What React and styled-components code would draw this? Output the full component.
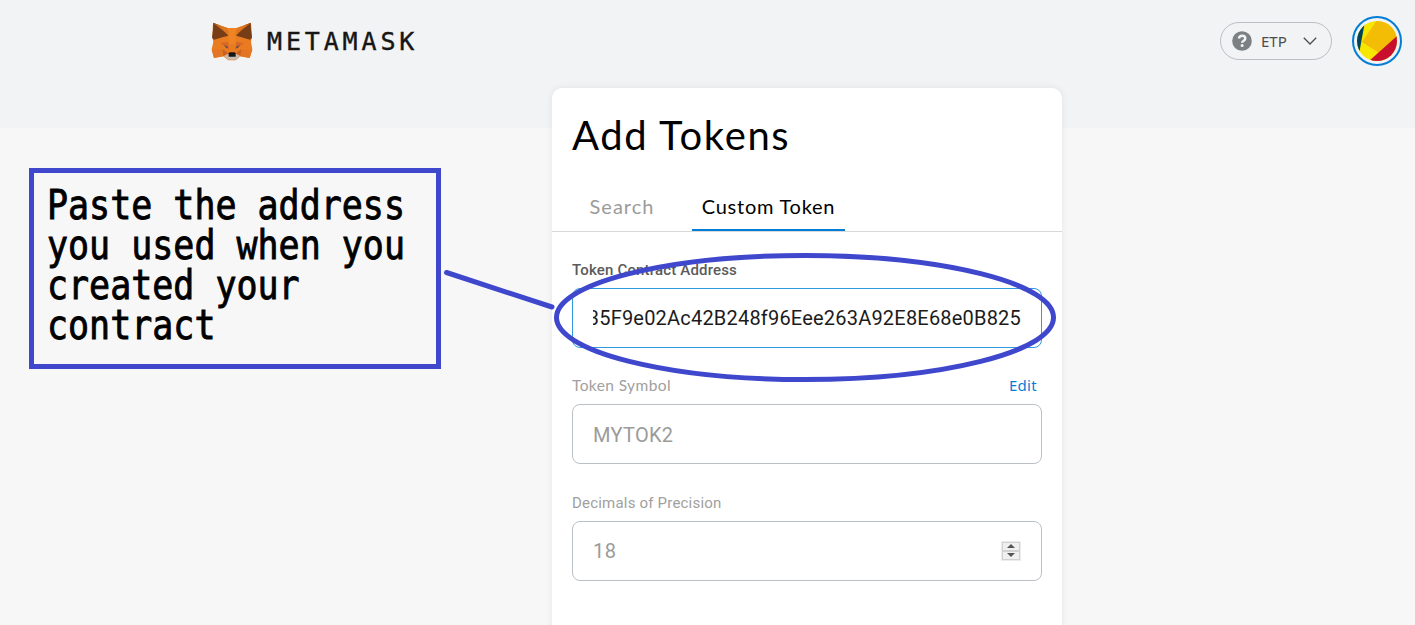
import React from 'react';
import styled, { createGlobalStyle } from 'styled-components';

const GlobalStyle = createGlobalStyle`
  * { box-sizing: border-box; }
  body {
    margin: 0;
    background: #f7f7f7;
    font-family: Roboto, "Liberation Sans", sans-serif;
    overflow: hidden;
  }
`;

const Page = styled.div`
  position: relative;
  height: 625px;
  overflow: hidden;
  background: linear-gradient(#f2f3f4 128px, #f7f7f7 128px);
`;

const Header = styled.header`
  display: flex;
  align-items: center;
  justify-content: space-between;
  height: 88px;
  padding: 0 13px 6px 211px;
`;

const Brand = styled.div`
  display: flex;
  align-items: center;
  gap: 14px;
`;

const Wordmark = styled.span`
  padding-top: 2px;
  font: 25px/30px "DejaVu Sans Mono", monospace;
  letter-spacing: 3.85px;
  color: #161616;
  -webkit-text-stroke: 0.4px #161616;
`;

const Account = styled.div`
  display: flex;
  align-items: center;
  gap: 20px;
`;

const NetworkPill = styled.div`
  display: flex;
  align-items: center;
  width: 112px;
  height: 38px;
  padding: 0 14px 0 11px;
  border: 1px solid #bbc0c5;
  border-radius: 19px;
  color: #4d4d4d;
`;

const NetworkName = styled.span`
  flex: 1;
  padding-left: 9px;
  font: 15px/20px "Noto Sans", sans-serif;
`;

const AvatarRing = styled.div`
  display: flex;
  align-items: center;
  justify-content: center;
  width: 50px;
  height: 50px;
  border: 2px solid #037dd6;
  border-radius: 50%;
`;

const Card = styled.main`
  width: 510px;
  height: 560px;
  margin-left: 552px;
  background: #fff;
  border-radius: 10px;
  box-shadow: 0 0 7px rgba(0, 0, 0, 0.08);
`;

const Title = styled.h1`
  margin: 0;
  padding: 23px 20px 0;
  font: 400 40px/48px Lato, sans-serif;
  letter-spacing: 1.65px;
  color: #000;
`;

const Tabs = styled.nav`
  display: flex;
  gap: 20px;
  height: 48px;
  margin-top: 25px;
  padding-left: 20px;
  border-bottom: 1px solid #d6d9dc;
`;

const Tab = styled.div`
  width: ${(p) => p.$width}px;
  height: 47px;
  padding-top: 10px;
  text-align: center;
  white-space: nowrap;
  font: 400 20px/24px Lato, sans-serif;
  letter-spacing: ${(p) => p.$spacing}px;
  color: ${(p) => (p.$active ? '#000' : '#9b9b9b')};
  border-bottom: ${(p) => (p.$active ? '2px solid #037dd6' : 'none')};
`;

const Form = styled.div`
  display: flex;
  flex-direction: column;
  padding: 28px 20px 0;
`;

const Field = styled.section`
  height: ${(p) => p.$height}px;
`;

const LabelRow = styled.div`
  display: flex;
  justify-content: space-between;
  height: ${(p) => p.$height}px;
  padding-right: 5px;
  line-height: 20px;
`;

const Label = styled.span`
  font-family: ${(p) => (p.$light ? 'Lato' : 'Roboto')}, sans-serif;
  font-size: ${(p) => p.$size}px;
  font-weight: ${(p) => (p.$strong ? 500 : 400)};
  letter-spacing: ${(p) => p.$spacing || 0}px;
  color: ${(p) => (p.$strong ? '#5b5b5b' : '#a0a0a0')};
`;

const EditLink = styled.span`
  font: 15px/20px "Noto Sans", sans-serif;
  letter-spacing: 0.3px;
  color: #037dd6;
`;

const InputBox = styled.div`
  display: flex;
  align-items: center;
  justify-content: space-between;
  height: 60px;
  padding: 0 20px;
  border: 1px solid ${(p) => (p.$focused ? '#2f9ae0' : '#bbc0c5')};
  border-radius: 8px;
  font-size: 20px;
  color: #9b9b9b;
`;

const Value = styled.span`
  padding-top: ${(p) => p.$drop || 0}px;
  letter-spacing: ${(p) => p.$spacing}px;
`;

const ScrolledValue = styled.div`
  display: flex;
  justify-content: flex-end;
  width: 100%;
  overflow: hidden;
  letter-spacing: 0.2px;
  color: #1b1b1b;
`;

const Spinner = styled.div`
  display: flex;
  flex-direction: column;
  width: 20px;
  height: 20px;
  margin-bottom: 1px;
  border: 1px solid #ececec;
`;

const SpinButton = styled.div`
  display: flex;
  flex: 1;
  align-items: center;
  justify-content: center;
  border: 1px solid #d2d2d2;
  background: #f0f0f0;
`;

const Callout = styled.aside`
  position: absolute;
  left: 29px;
  top: 168px;
  width: 412px;
  height: 201px;
  padding: 12px 0 0 13px;
  border: 5px solid #3f48cc;
`;

const CalloutText = styled.p`
  margin: 0;
  font: 41px/40px "DejaVu Sans Mono", monospace;
  white-space: pre;
  color: #000;
  -webkit-text-stroke: 0.9px #000;
  transform: scaleX(0.853);
  transform-origin: 0 0;
`;

const Markup = styled.svg`
  position: absolute;
  inset: 0;
  pointer-events: none;
`;

function Fox() {
  return (
    <svg width="42" height="39" viewBox="0 0 126 117">
      <path d="M6 3 50 18H77L120 3 123 42 120 60 124 82 116 108 88 103 74 115H52L37 103 9 108 2 82 7 60 4 42Z" fill="#e97b20" />
      <path d="M50 18H77L72 66H54Z" fill="#f08425" />
      <path d="M7 2 24 9 52 41 34 46 9 53 3 47 6 24Z" fill="#763d16" />
      <path d="M119 2 102 9 75 41 92 46 117 53 123 47 120 24Z" fill="#763d16" />
      <path d="M8 4 50 18 55 41ZM118 4 77 18 72 41Z" fill="#de751f" opacity=".85" />
      <path d="M28 63 51 60 54 83ZM99 63 76 60 72 83Z" fill="#d5672a" />
      <path d="M2 83H35L37 103 9 108ZM124 83H91L88 103 116 108Z" fill="#e27625" />
      <path d="M35 82 50 92 37 103ZM91 82 76 92 88 103Z" fill="#c95f27" />
      <path d="M39 70 51 75 48 79ZM87 70 75 75 78 79Z" fill="#344451" />
      <path d="M39 102 54 95H73L88 102 74 113H52Z" fill="#c8bcb1" />
      <path d="M53 94 56 91H71L74 94V104H53Z" fill="#161616" />
    </svg>
  );
}

function HelpIcon() {
  return (
    <svg width="20" height="20" viewBox="0 0 20 20">
      <circle cx="10" cy="10" r="9.8" fill="#7b8085" />
      <path d="M6.8 7.6C7.2 5.6 8.4 4.8 10.1 4.8c1.8 0 3.2 1.1 3.2 2.7 0 2.3-3.1 2.3-3.1 4.3" fill="none" stroke="#f2f3f4" strokeWidth="2.5" />
      <circle cx="10.1" cy="14.6" r="1.5" fill="#f2f3f4" />
    </svg>
  );
}

function Avatar() {
  return (
    <svg width="40" height="40" viewBox="0 0 40 40">
      <defs>
        <clipPath id="disc"><circle cx="20" cy="20" r="20" /></clipPath>
      </defs>
      <g clipPath="url(#disc)">
        <path d="M0 0H40V40H0Z" fill="#f7e700" />
        <path d="M0 0H8L7 6 2 33H0Z" fill="#02435c" />
        <path d="M20-1H41V17L22 32 5 21Z" fill="#f3bd05" />
        <path d="M12 40 40 15V41Z" fill="#c8102e" />
      </g>
    </svg>
  );
}

function SpinArrow({ down }) {
  return (
    <svg width="8" height="4" viewBox="0 0 8 4">
      <path d={down ? 'M0 0H8L4 4Z' : 'M0 4H8L4 0Z'} fill="#555" />
    </svg>
  );
}

export default function App() {
  return (
    <Page>
      <GlobalStyle />
      <Header>
        <Brand>
          <Fox />
          <Wordmark>METAMASK</Wordmark>
        </Brand>
        <Account>
          <NetworkPill>
            <HelpIcon />
            <NetworkName>ETP</NetworkName>
            <svg width="14" height="8" viewBox="0 0 14 8">
              <path d="M.8.8 7 7 13.2.8" fill="none" stroke="#4d4d4d" strokeWidth="1.3" />
            </svg>
          </NetworkPill>
          <AvatarRing><Avatar /></AvatarRing>
        </Account>
      </Header>

      <Card>
        <Title>Add Tokens</Title>
        <Tabs>
          <Tab $width={100} $spacing={1}>Search</Tab>
          <Tab $width={153} $spacing={0.75} $active>Custom Token</Tab>
        </Tabs>
        <Form>
          <Field $height={115}>
            <LabelRow $height={28}><Label $strong $size={15} $spacing={0.17}>Token Contract Address</Label></LabelRow>
            <InputBox $focused>
              <ScrolledValue>35F9e02Ac42B248f96Eee263A92E8E68e0B825</ScrolledValue>
            </InputBox>
          </Field>
          <Field $height={118}>
            <LabelRow $height={29}>
              <Label $light $size={15.5} $spacing={0.4}>Token Symbol</Label>
              <EditLink>Edit</EditLink>
            </LabelRow>
            <InputBox><Value $spacing={0.3} $drop={1}>MYTOK2</Value></InputBox>
          </Field>
          <Field $height={88}>
            <LabelRow $height={28}><Label $size={15} $spacing={0.2}>Decimals of Precision</Label></LabelRow>
            <InputBox>
              <Value $spacing={0.5}>18</Value>
              <Spinner>
                <SpinButton><SpinArrow /></SpinButton>
                <SpinButton><SpinArrow down /></SpinButton>
              </Spinner>
            </InputBox>
          </Field>
        </Form>
      </Card>

      <Callout>
        <CalloutText>{'Paste the address\nyou used when you\ncreated your\ncontract'}</CalloutText>
      </Callout>
      <Markup width="1415" height="625" viewBox="0 0 1415 625" fill="none" stroke="#3f48cc" strokeWidth="5">
        <path d="M446.500 272.500 552 307" strokeLinecap="round" />
        <ellipse cx="805" cy="317.500" rx="248.500" ry="62" />
      </Markup>
    </Page>
  );
}
